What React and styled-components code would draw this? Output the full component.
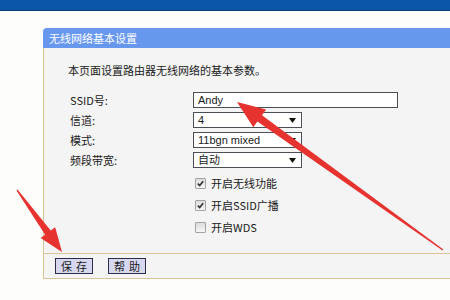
import React from "react";
import styled, { createGlobalStyle } from "styled-components";

const GlobalStyle = createGlobalStyle`
  html, body {
    margin: 0;
    padding: 0;
    background: #fdfdf9;
    overflow: hidden;
  }
  body {
    font-family: "Noto Sans CJK SC", "Liberation Sans", sans-serif;
    font-size: 11px;
    color: #1a1a1a;
  }
`;

const Page = styled.div`
  position: relative;
  width: 450px;
  height: 300px;
  overflow: hidden;
`;

const TopBar = styled.div`
  height: 10px;
  background: #0c56a7;
  border-bottom: 1px solid #073a74;
`;

const Content = styled.div`
  padding: 17px 0 0 43px;
`;

const Panel = styled.div`
  display: flex;
  flex-direction: column;
`;

const Title = styled.div`
  height: 20px;
  line-height: 20px;
  padding-left: 6px;
  background: #6898ee;
  color: #fff;
  border-top-left-radius: 4px;
  font-size: 11px;
`;

const Body = styled.div`
  background: #f4f4f4;
  border-left: 1px solid #dcc395;
  padding: 15px 0 15px 24px;
`;

const Intro = styled.div`
  line-height: 14px;
  margin-bottom: 13px;
`;

const Form = styled.div`
  display: grid;
  grid-template-columns: 123px 1fr;
  grid-auto-rows: 20px;
  align-items: center;
  margin-left: 2px;
`;

const Label = styled.div`
  line-height: 14px;
`;

const TextBox = styled.div`
  width: 199px;
  height: 14px;
  border: 1px solid #4a4f55;
  background: #fff;
  padding-left: 4px;
  font-family: "Liberation Sans", "Noto Sans CJK SC", sans-serif;
  font-size: 11px;
  line-height: 14px;
`;

const SelectBox = styled.div`
  width: 98px;
  height: 14px;
  border: 1px solid #4a4f55;
  background: #fff;
  display: flex;
  align-items: center;
  justify-content: space-between;
  padding: 0 5px 0 4px;
  font-family: "Liberation Sans", "Noto Sans CJK SC", sans-serif;
  font-size: 11px;
  line-height: 14px;
`;

const Checks = styled.div`
  display: grid;
  grid-auto-rows: 22px;
  align-items: center;
  margin: 2px 0 0 127px;
`;

const CheckRow = styled.label`
  display: flex;
  align-items: center;
  gap: 5px;
  line-height: 14px;
`;

const Box = styled.span`
  width: 9px;
  height: 9px;
  border: 1px solid #a3a3a3;
  border-radius: 1px;
  background: linear-gradient(#dcdcdc, #f6f6f6);
  display: flex;
  align-items: center;
  justify-content: center;
`;

const Footer = styled.div`
  height: 24px;
  background: #f4f4f4;
  border-top: 1px solid #dcc395;
  border-bottom: 1px solid #dcc395;
  border-left: 1px solid #dcc395;
  display: flex;
  align-items: center;
  gap: 15px;
  padding-left: 11px;
`;

const Button = styled.button`
  width: 38px;
  height: 16px;
  padding: 0;
  border: 1px solid #2b2d4a;
  background: #d7d7ef;
  font-family: "Noto Sans CJK SC", sans-serif;
  font-size: 11px;
  line-height: 14px;
  letter-spacing: 4px;
  text-indent: 4px;
  color: #1a1a1a;
`;

const Overlay = styled.svg`
  position: absolute;
  left: 0;
  top: 0;
  pointer-events: none;
`;

const DropArrow = () => (
  <svg width="7" height="5" viewBox="0 0 7 5">
    <path d="M0 0h7L3.5 5z" fill="#111" />
  </svg>
);

const Select = ({ value }) => (
  <SelectBox>
    <span>{value}</span>
    <DropArrow />
  </SelectBox>
);

const Check = ({ checked, children }) => (
  <CheckRow>
    <Box>
      {checked && (
        <svg width="7" height="7" viewBox="0 0 7 7">
          <path d="M0.8 3.6 2.7 5.6 6.2 1.2" fill="none" stroke="#333" strokeWidth="1.6" />
        </svg>
      )}
    </Box>
    {children}
  </CheckRow>
);

export default function App() {
  return (
    <Page>
      <GlobalStyle />
      <TopBar />
      <Content>
        <Panel>
          <Title>无线网络基本设置</Title>
          <Body>
            <Intro>本页面设置路由器无线网络的基本参数。</Intro>
            <Form>
              <Label>SSID号:</Label>
              <TextBox>Andy</TextBox>
              <Label>信道:</Label>
              <Select value="4" />
              <Label>模式:</Label>
              <Select value="11bgn mixed" />
              <Label>频段带宽:</Label>
              <Select value="自动" />
            </Form>
            <Checks>
              <Check checked>开启无线功能</Check>
              <Check checked>开启SSID广播</Check>
              <Check>开启WDS</Check>
            </Checks>
          </Body>
          <Footer>
            <Button>保存</Button>
            <Button>帮助</Button>
          </Footer>
        </Panel>
      </Content>
      <Overlay width="450" height="300" viewBox="0 0 450 300">
        <polygon
          points="237,102 266.1,109.5 262,115.2 443.4,249.4 442.6,250.6 257.4,121.6 253.3,127.3"
          fill="#e6332f"
        />
        <polygon
          points="62,252 55.2,227.3 50.7,230.5 17.5,189.6 16.5,190.4 45.1,234.7 40.6,237.9"
          fill="#e6332f"
        />
      </Overlay>
    </Page>
  );
}
